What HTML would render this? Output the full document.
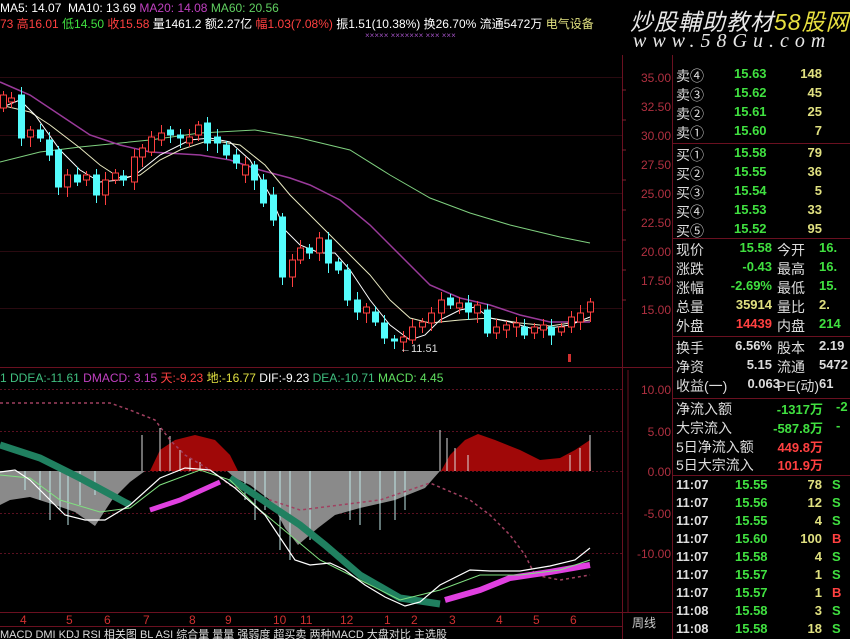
<!DOCTYPE html>
<html><head><meta charset="utf-8"><style>
body{margin:0;background:#000;width:850px;height:639px;overflow:hidden;font-family:"Liberation Sans","Noto Sans CJK SC",sans-serif;}
.t{position:absolute;white-space:nowrap;}
</style></head><body>
<svg id="s" width="850" height="639" style="position:absolute;left:0;top:0" xmlns="http://www.w3.org/2000/svg" font-family="Liberation Sans, Noto Sans CJK SC, sans-serif">
<g stroke="#6a1020" stroke-width="1" fill="none">
<line x1="0" y1="367.5" x2="622" y2="367.5"/>
<line x1="0" y1="612.5" x2="622" y2="612.5"/>
<line x1="0" y1="626.5" x2="622" y2="626.5"/>
<line x1="622.5" y1="55" x2="622.5" y2="639"/>
<line x1="672.5" y1="55" x2="672.5" y2="639"/>
<line x1="672" y1="143.5" x2="850" y2="143.5"/>
<line x1="672" y1="238.5" x2="850" y2="238.5"/>
<line x1="672" y1="336.5" x2="850" y2="336.5"/>
<line x1="672" y1="398.5" x2="850" y2="398.5"/>
<line x1="672" y1="475.5" x2="850" y2="475.5"/>
<line x1="622" y1="367.5" x2="672" y2="367.5"/>
<line x1="628" y1="370" x2="628" y2="612"/>
<line x1="622" y1="612.5" x2="672" y2="612.5"/>
</g>
<g stroke="#2a0a10" stroke-width="1">
<line x1="0" y1="77.5" x2="622" y2="77.5"/><line x1="0" y1="135.5" x2="622" y2="135.5"/>
<line x1="0" y1="193.5" x2="622" y2="193.5"/><line x1="0" y1="251.5" x2="622" y2="251.5"/>
<line x1="0" y1="308.5" x2="622" y2="308.5"/>
</g>
<g stroke="#5a1020" stroke-dasharray="2,2">
<line x1="0" y1="389.5" x2="622" y2="389.5"/><line x1="0" y1="431.5" x2="622" y2="431.5"/>
<line x1="0" y1="471.5" x2="622" y2="471.5"/><line x1="0" y1="513.5" x2="622" y2="513.5"/>
<line x1="0" y1="553.5" x2="622" y2="553.5"/>
</g>
<g fill="#b03040" font-size="12" text-anchor="end">
<text x="671" y="82">35.00</text><text x="671" y="111">32.50</text><text x="671" y="140">30.00</text>
<text x="671" y="169">27.50</text><text x="671" y="198">25.00</text><text x="671" y="227">22.50</text>
<text x="671" y="256">20.00</text><text x="671" y="285">17.50</text><text x="671" y="314">15.00</text>
<text x="671" y="394">10.00</text><text x="671" y="436">5.00</text><text x="671" y="476">0.00</text>
<text x="671" y="518">-5.00</text><text x="671" y="558">-10.00</text>
</g>
<g stroke="#802030"><line x1="622" y1="90" x2="626" y2="90"/><line x1="622" y1="120" x2="626" y2="120"/><line x1="622" y1="150" x2="626" y2="150"/><line x1="622" y1="180" x2="626" y2="180"/><line x1="622" y1="210" x2="626" y2="210"/><line x1="622" y1="240" x2="626" y2="240"/><line x1="622" y1="270" x2="626" y2="270"/><line x1="622" y1="300" x2="626" y2="300"/></g>
<text x="632" y="627" fill="#ccc" font-size="12">周线</text>
<polygon fill="#8a8a8a" points="0,471 145,471 130,482 112,500 95,526 75,512 55,505 30,497 10,500 0,505"/>
<polygon fill="#8a8a8a" points="227,471 440,471 425,488 395,500 360,508 335,515 318,528 298,545 285,528 270,500 250,485 235,478"/>
<polygon fill="#a00808" points="150,471 160,450 175,440 195,435 215,440 230,455 238,471"/>
<polygon fill="#a00808" points="441,471 450,455 465,440 478,434 495,440 520,450 540,460 560,458 575,450 590,440 591,471"/>
<g stroke="#dddddd" stroke-width="1">
<line x1="142" y1="435" x2="142" y2="471"/><line x1="160" y1="428" x2="160" y2="471"/><line x1="170" y1="436" x2="170" y2="471"/>
<line x1="180" y1="450" x2="180" y2="471"/><line x1="190" y1="458" x2="190" y2="471"/><line x1="200" y1="462" x2="200" y2="471"/>
<line x1="440" y1="430" x2="440" y2="471"/><line x1="447" y1="438" x2="447" y2="471"/><line x1="455" y1="448" x2="455" y2="471"/>
<line x1="468" y1="455" x2="468" y2="471"/><line x1="570" y1="455" x2="570" y2="471"/><line x1="580" y1="448" x2="580" y2="471"/><line x1="590" y1="435" x2="590" y2="471"/>
</g>
<g stroke="#c0e8e8" stroke-width="1">
<line x1="25" y1="471" x2="25" y2="490"/><line x1="40" y1="471" x2="40" y2="500"/><line x1="50" y1="471" x2="50" y2="520"/>
<line x1="60" y1="471" x2="60" y2="510"/><line x1="68" y1="471" x2="68" y2="525"/><line x1="80" y1="471" x2="80" y2="505"/><line x1="95" y1="471" x2="95" y2="495"/>
<line x1="245" y1="471" x2="245" y2="500"/><line x1="255" y1="471" x2="255" y2="520"/><line x1="265" y1="471" x2="265" y2="510"/><line x1="280" y1="471" x2="280" y2="550"/><line x1="290" y1="471" x2="290" y2="560"/>
<line x1="310" y1="471" x2="310" y2="540"/><line x1="350" y1="471" x2="350" y2="520"/><line x1="360" y1="471" x2="360" y2="525"/><line x1="380" y1="471" x2="380" y2="530"/><line x1="395" y1="471" x2="395" y2="520"/><line x1="405" y1="471" x2="405" y2="510"/>
</g>
<polyline fill="none" stroke="#a04060" stroke-width="1.5" stroke-dasharray="3,3" points="0,403 110,403 130,410 155,420 170,440 185,455 210,470 230,485 270,500 300,510 380,500 430,483 470,500 490,515 510,535 525,555 535,575 560,580 590,575"/>
<polyline fill="none" stroke="#208060" stroke-width="7" points="0,445 40,458 80,478 130,505"/>
<polyline fill="none" stroke="#208060" stroke-width="7" points="230,478 270,505 300,525 325,545 360,575 400,598 440,604"/>
<polyline fill="none" stroke="#e040e0" stroke-width="5" points="150,510 180,500 220,482"/>
<polyline fill="none" stroke="#e040e0" stroke-width="6" points="445,600 480,590 510,578 550,572 590,565"/>
<polyline fill="none" stroke="#80e080" stroke-width="1" points="0,475 30,478 60,500 100,512 130,508 160,485 200,470 230,480 260,510 290,535 320,560 360,580 400,600 440,590 480,575 520,575 560,570 590,560"/>
<polyline fill="none" stroke="#ffffff" stroke-width="1.2" points="0,472 15,470 30,480 50,500 65,515 85,520 105,520 130,505 160,478 185,468 210,470 235,488 265,515 285,545 295,560 310,565 330,563 345,570 365,585 385,597 405,606 420,602 440,585 470,570 490,571 520,571 550,566 575,560 590,548"/>
<g fill="#d03030" font-size="12">
<text x="20" y="624">4</text><text x="66" y="624">5</text><text x="104" y="624">6</text><text x="143" y="624">7</text><text x="189" y="624">8</text><text x="225" y="624">9</text><text x="273" y="624">10</text><text x="300" y="624">11</text><text x="340" y="624">12</text><text x="384" y="624">1</text><text x="411" y="624">2</text><text x="449" y="624">3</text><text x="496" y="624">4</text><text x="533" y="624">5</text><text x="570" y="624">6</text>
</g>
<g fill="#ddd" font-size="11"><text x="0" y="638">MACD  DMI  KDJ  RSI  相关图  BL  ASI  综合量  量量  强弱度  超买卖  两种MACD  大盘对比  主选股</text></g>
<text x="365" y="38" font-size="8" fill="#a050c0">×××××   ××××××× ×××  ×××</text>
<polyline fill="none" stroke="#7fd07f" stroke-width="1" points="0,162 40,152 80,147 150,140 200,133 255,130 300,138 350,150 390,175 430,198 470,213 510,225 560,237 590,243"/>
<polyline fill="none" stroke="#9a3a9a" stroke-width="1.5" points="0,82 30,95 60,115 90,135 120,145 150,152 200,155 230,160 260,170 290,178 310,185 340,200 370,225 400,255 430,285 460,298 490,305 520,315 550,322 590,322"/>
<polyline fill="none" stroke="#e8e8c0" stroke-width="1" points="0,105 30,112 50,125 80,148 100,165 120,178 140,175 160,160 180,150 210,140 240,145 265,165 290,195 310,215 330,235 350,255 370,275 390,300 410,318 430,323 460,320 490,318 520,323 550,326 590,320"/>
<polyline fill="none" stroke="#ffffff" stroke-width="1" points="0,108 20,100 35,115 60,150 80,170 100,182 120,180 135,175 160,155 190,140 210,138 230,142 250,160 270,195 285,230 300,245 320,253 335,253 350,270 370,300 390,325 410,340 425,335 440,320 460,310 475,307 490,318 510,322 530,328 550,328 570,325 590,317"/>
<g id="c"></g>
<text x="400" y="352" fill="#ddd" font-size="11">←11.51</text>
<rect x="568" y="354" width="3" height="8" fill="#d03030"/>
</svg>
<script>
var d=[[3,95,108,1],[11,98,102,1],[21,95,138,0],[30,130,137,1],[40,130,138,0],[49,140,155,0],[58,150,187,0],[67,175,187,1],[77,175,182,0],[86,175,180,1],[96,175,195,0],[105,180,195,1],[115,173,180,1],[123,176,180,0],[134,157,182,1],[142,148,157,1],[151,137,152,1],[161,133,140,1],[170,130,135,0],[180,135,138,0],[189,137,143,1],[198,125,135,1],[207,123,143,0],[217,137,143,0],[226,145,155,0],[236,155,163,0],[245,165,175,1],[254,165,180,0],[263,180,203,0],[273,195,220,0],[282,217,277,0],[292,260,277,1],[300,248,260,1],[309,248,253,0],[319,238,253,1],[328,240,263,0],[338,262,270,0],[347,270,300,0],[357,300,312,0],[366,307,313,1],[375,312,322,0],[384,323,338,0],[394,339,341,0],[403,337,342,1],[412,327,340,1],[422,322,327,1],[431,313,323,1],[441,300,313,1],[450,298,305,0],[459,303,308,1],[468,303,312,0],[477,305,313,1],[487,310,333,0],[496,327,333,1],[506,325,330,1],[516,323,327,1],[524,327,335,0],[534,327,333,1],[543,325,330,1],[551,327,335,0],[561,327,332,1],[571,317,327,1],[580,313,322,1],[590,302,312,1]];
var h='';d.forEach(function(c,i){var col=c[3]?'#ff4040':'#54fcfc';var hi=c[1]-4-(i%3)*2,lo=c[2]+4+(i%4)*2;
h+='<line x1="'+(c[0]+.5)+'" y1="'+hi+'" x2="'+(c[0]+.5)+'" y2="'+lo+'" stroke="'+col+'"/>';
h+='<rect x="'+(c[0]-2.5)+'" y="'+c[1]+'" width="6" height="'+Math.max(1,c[2]-c[1])+'" fill="'+(c[3]?'#000':col)+'" stroke="'+col+'"/>';});
document.getElementById('c').innerHTML=h;
</script>
<div class="t" style="left:0;top:1px;font-size:12px;color:#fff">MA5: 14.07 &nbsp;MA10: 13.69 <span style="color:#c040c0">MA20: 14.08</span> <span style="color:#60d060">MA60: 20.56</span></div>
<div class="t" style="left:0;top:15px;font-size:12px;color:#ff4040">73 高16.01 <span style="color:#40e040">低14.50</span> 收15.58 <span style="color:#fff">量1461.2 额2.27亿</span> 幅1.03(7.08%) <span style="color:#fff">振1.51(10.38%) 换26.70% 流通5472万</span> <span style="color:#e0e080">电气设备</span></div>
<div class="t" style="left:0;top:369px;font-size:12px;color:#40c080">1 DDEA:-11.61 <span style="color:#c040c0">DMACD: 3.15</span> <span style="color:#ff4040">天:-9.23</span> <span style="color:#e0e040">地:-16.77</span> <span style="color:#fff">DIF:-9.23</span> <span style="color:#40c080">DEA:-10.71</span> <span style="color:#60e060">MACD: 4.45</span></div>
<div class="t" style="left:630px;top:3px;font-size:23px;color:#e8e8e8;font-style:italic;letter-spacing:1px">炒股輔助教材<span style="color:#e8e040">58股网</span></div>
<div class="t" style="left:633px;top:30px;font-size:20px;color:#e8e8e8;font-style:italic;letter-spacing:6px;font-family:'Liberation Serif',serif">www.58Gu.com</div>
<div id="q" style="position:absolute;left:676px;top:0;width:174px;font-size:14px;color:#ddd"></div>
<script>
var R=[[66,'卖④','15.63','148'],[85,'卖③','15.62','45'],[104,'卖②','15.61','25'],[123,'卖①','15.60','7'],
[145,'买①','15.58','79'],[164,'买②','15.55','36'],[183,'买③','15.54','5'],[202,'买④','15.53','33'],[221,'买⑤','15.52','95']];
var o='';R.forEach(function(r){o+='<div class="t" style="top:'+r[0]+'px;left:0">'+r[1]+'</div><div class="t" style="top:'+r[0]+'px;left:58px;color:#40e040;font-weight:bold;font-size:13px">'+r[2]+'</div><div class="t" style="top:'+r[0]+'px;right:28px;color:#e0e080;font-weight:bold;font-size:13px">'+r[3]+'</div>';});
var S=[[240,'现价','15.58','#40e040','今开','16.','#40e040'],[259,'涨跌','-0.43','#40e040','最高','16.','#40e040'],[278,'涨幅','-2.69%','#40e040','最低','15.','#40e040'],[297,'总量','35914','#e0e080','量比','2.','#e0e080'],[316,'外盘','14439','#ff4040','内盘','214','#40e040'],
[338,'换手','6.56%','#ddd','股本','2.19','#ddd'],[357,'净资','5.15','#ddd','流通','5472','#ddd'],[376,'收益(一)','0.063','#ddd','PE(动)','61','#ddd']];
S.forEach(function(r){o+='<div class="t" style="top:'+r[0]+'px;left:0">'+r[1]+'</div><div class="t" style="top:'+r[0]+'px;left:'+(r[1].length>2?58:50)+'px;width:46px;text-align:right;color:'+r[3]+';font-weight:bold;font-size:13px">'+r[2]+'</div><div class="t" style="top:'+r[0]+'px;left:101px">'+r[4]+'</div><div class="t" style="top:'+r[0]+'px;left:143px;color:'+r[6]+';font-weight:bold;font-size:13px">'+r[5]+'</div>';});
var F=[[399,'净流入额','-1317万','#40e040','-2'],[418,'大宗流入','-587.8万','#40e040','-'],[437,'5日净流入额','449.8万','#ff4040',''],[455,'5日大宗流入','101.9万','#ff4040','']];
F.forEach(function(r){o+='<div class="t" style="top:'+r[0]+'px;left:0">'+r[1]+'</div><div class="t" style="top:'+r[0]+'px;left:90px;width:57px;text-align:right;color:'+r[3]+';font-weight:bold;font-size:13px">'+r[2]+'</div><div class="t" style="top:'+r[0]+'px;left:160px;color:'+r[3]+';font-weight:bold;font-size:13px">'+r[4]+'</div>';});
var T=[['11:07','15.55','78','S'],['11:07','15.56','12','S'],['11:07','15.55','4','S'],['11:07','15.60','100','B'],['11:07','15.58','4','S'],['11:07','15.57','1','S'],['11:07','15.57','1','B'],['11:08','15.58','3','S'],['11:08','15.58','18','S']];
T.forEach(function(r,i){var y=477+i*18;o+='<div class="t" style="top:'+y+'px;left:0;font-weight:bold;font-size:13px">'+r[0]+'</div><div class="t" style="top:'+y+'px;left:59px;color:#40e040;font-weight:bold;font-size:13px">'+r[1]+'</div><div class="t" style="top:'+y+'px;right:28px;color:#e0e080;font-weight:bold;font-size:13px">'+r[2]+'</div><div class="t" style="top:'+y+'px;left:156px;color:'+(r[3]=='B'?'#ff4040':'#40e040')+';font-weight:bold;font-size:13px">'+r[3]+'</div>';});
document.getElementById('q').innerHTML=o;
</script>
</body></html>
